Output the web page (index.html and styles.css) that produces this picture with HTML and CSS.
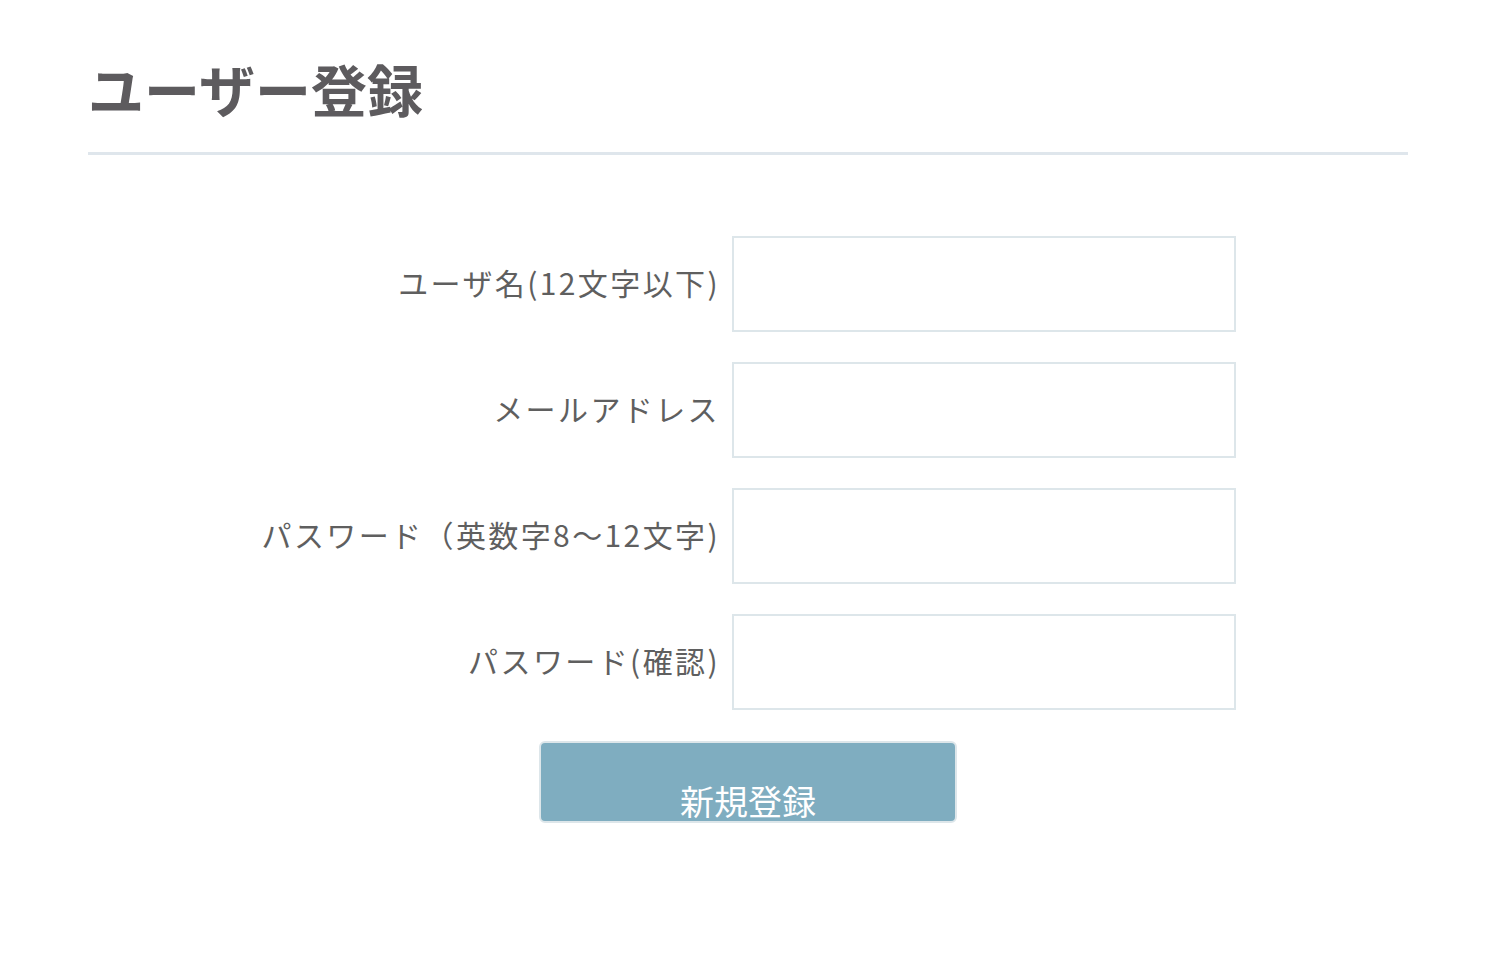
FILE: index.html
```html
<!DOCTYPE html>
<html lang="ja">
<head>
<meta charset="utf-8">
<title>ユーザー登録</title>
<link rel="stylesheet" href="styles.css">
</head>
<body>
<div class="container">
  <h1 class="title">ユーザー登録</h1>
  <form class="form">
    <div class="grid">
      <label class="label" for="name">ユーザ名(12文字以下)</label>
      <input class="input" id="name" type="text">
      <label class="label" for="mail">メールアドレス</label>
      <input class="input" id="mail" type="email">
      <label class="label" for="pw">パスワード（英数字8〜12文字)</label>
      <input class="input" id="pw" type="password">
      <label class="label" for="pw2">パスワード(確認)</label>
      <input class="input" id="pw2" type="password">
    </div>
    <button class="submit" type="button">新規登録</button>
  </form>
</div>
</body>
</html>
```

FILE: styles.css
```css
html, body {
  margin: 0;
  padding: 0;
  background: #ffffff;
}
body {
  font-family: "Noto Sans CJK JP", "Noto Sans", sans-serif;
  color: #5e5e5e;
}
.container {
  width: 1320px;
  margin: 0 auto;
}
.title {
  margin: 0;
  padding-top: 54px;
  padding-bottom: 31px;
  font-size: 56px;
  line-height: 67px;
  font-weight: 700;
  color: #5d5b5e;
  border-bottom: 3px solid #dfe6ec;
}
.form {
  padding-top: 81px;
  display: flex;
  flex-direction: column;
}
.grid {
  display: grid;
  grid-template-columns: 632px 504px;
  column-gap: 12px;
  row-gap: 30px;
  align-items: center;
}
.label {
  text-align: right;
  font-size: 30px;
  letter-spacing: 2.4px;
  color: #5f5f5f;
  line-height: 40px;
  padding-bottom: 5px;
  white-space: nowrap;
}
.input {
  box-sizing: border-box;
  width: 504px;
  height: 96px;
  margin: 0;
  border: 2px solid #dde6ea;
  background: #fff;
  outline: none;
}
.submit {
  box-sizing: border-box;
  align-self: center;
  margin-top: 31px;
  width: 418px;
  height: 82px;
  border: 2px solid #dde6ea;
  border-radius: 6px;
  background: #7fadc0;
  color: #ffffff;
  font-family: "Noto Sans CJK JP", "Noto Sans", sans-serif;
  font-size: 34px;
  line-height: 34px;
  padding: 41px 0 3px;
  text-align: center;
  overflow: hidden;
}
```
